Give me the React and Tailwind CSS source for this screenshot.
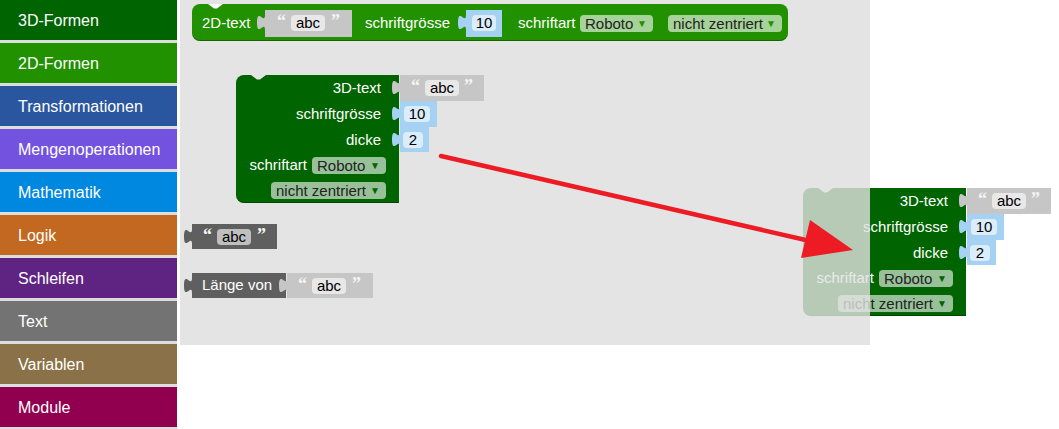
const categories = [
  ["3D-Formen", "bg-[#006400]"],
  ["2D-Formen", "bg-[#229100]"],
  ["Transformationen", "bg-[#2a56a0]"],
  ["Mengenoperationen", "bg-[#7452e0]"],
  ["Mathematik", "bg-[#0088e0]"],
  ["Logik", "bg-[#c26820]"],
  ["Schleifen", "bg-[#5f2382]"],
  ["Text", "bg-[#737373]"],
  ["Variablen", "bg-[#8b7148]"],
  ["Module", "bg-[#91004f]"],
];

function Tab({ fill }) {
  return (
    <svg width="8" height="15" viewBox="0 0 8 15" className="absolute -left-[8px] top-[5px] overflow-visible">
      <path d="M8.5 0 H8 C8 10 0 -8 0 7.5 S8 5 8 15 H8.5 Z" fill={fill} />
    </svg>
  );
}

function Notch({ fill, left }) {
  return (
    <svg width="15" height="5" viewBox="0 0 15 5" className={`absolute top-0 ${left}`}>
      <path d="M0 0 L6 4.5 L9 4.5 L15 0 Z" fill={fill} />
    </svg>
  );
}

function Field({ children, className = "" }) {
  return (
    <span className={`h-[16px] rounded-[4px] bg-white/60 text-black text-[15px] leading-[16px] flex items-center justify-center ${className}`}>
      {children}
    </span>
  );
}

function Dropdown({ label, arrow, className = "" }) {
  return (
    <span className={`h-[17px] rounded-[4px] bg-white/60 text-[#222] text-[15px] leading-[17px] flex items-center justify-between pl-[5px] pr-[6px] ${className}`}>
      <span>{label}</span>
      <span className={`text-[10px] ${arrow}`}>▼</span>
    </span>
  );
}

function Quote({ children, className = "" }) {
  return (
    <span className={`text-[#f4f4f4] font-bold text-[18px] leading-none -translate-y-[2px] font-['Liberation_Serif',serif] ${className}`}>
      {children}
    </span>
  );
}

function TextValue({ color = "#c6c6c6", className = "", quoteGap = "ml-[6px]" }) {
  return (
    <div className={`relative flex items-center pl-[11px] ${className}`} style={{ backgroundColor: color }}>
      <Tab fill={color} />
      <Quote className="w-[14px]">“</Quote>
      <Field className="w-[34px]">abc</Field>
      <Quote className={quoteGap}>”</Quote>
    </div>
  );
}

function NumValue({ value, className = "", fieldW }) {
  return (
    <div className={`relative flex items-center bg-[#a5d2f3] ${className}`}>
      <Tab fill="#a5d2f3" />
      <Field className={fieldW}>{value}</Field>
    </div>
  );
}

function ThreeDBlock({ className = "" }) {
  return (
    <div className={`flex items-start ${className}`}>
      <div className="relative w-[163px] h-[128px] bg-[#006400] rounded-l-[8px] flex flex-col text-white text-[15px] shadow-[inset_0_-1px_0_rgba(0,0,0,0.3)]">
        <Notch fill="#e4e4e4" left="left-[15px]" />
        <div className="h-[26px] flex items-center justify-end pr-[18px]">3D-text</div>
        <div className="h-[26px] flex items-center justify-end pr-[18px]">schriftgrösse</div>
        <div className="h-[26px] flex items-center justify-end pr-[18px]">dicke</div>
        <div className="h-[25px] flex items-center justify-end pr-[13px] gap-[5px]">
          <span>schriftart</span>
          <Dropdown label="Roboto" arrow="text-[#006400]" className="w-[74px]" />
        </div>
        <div className="h-[25px] flex items-center justify-end pr-[13px]">
          <Dropdown label="nicht zentriert" arrow="text-[#006400]" className="w-[115px]" />
        </div>
      </div>
      <div className="flex flex-col items-start ml-[1px]">
        <TextValue className="w-[84px] h-[26px]" quoteGap="ml-[5px]" />
        <NumValue value="10" className="w-[37px] h-[26px] pl-[4px]" fieldW="w-[26px]" />
        <NumValue value="2" className="w-[29px] h-[25px] pl-[3px]" fieldW="w-[20px]" />
      </div>
    </div>
  );
}

export default function App() {
  return (
    <div className="relative w-[1059px] h-[429px] bg-white flex overflow-hidden font-['Liberation_Sans',Arial,sans-serif]">
      <div className="w-[177px] h-[429px] flex flex-col gap-[3px] bg-[#dddddd]">
        {categories.map(([name, bg]) => (
          <div key={name} className={`h-[40px] shrink-0 flex items-center pl-[18px] pt-[2px] text-white text-[16px] ${bg}`}>
            {name}
          </div>
        ))}
      </div>

      <div className="relative ml-[3px] w-[690px] h-[345px] bg-[#e4e4e4]">
        {/* 2D-text block */}
        <div className="absolute left-[12px] top-[4px] w-[596px] h-[37px] rounded-[8px] bg-[#229100] flex items-center pl-[10px] pt-[1px] text-white text-[15px] shadow-[inset_0_-1px_0_rgba(0,0,0,0.3)]">
          <Notch fill="#ffffff" left="left-[16px]" />
          <span className="w-[63px]">2D-text</span>
          <TextValue className="w-[87px] h-[27px] pl-[12px]" />
          <span className="ml-[13px] w-[101px]">schriftgrösse</span>
          <NumValue value="10" className="w-[36px] h-[27px] pl-[6px]" fieldW="w-[24px]" />
          <span className="ml-[16px] w-[62px]">schriftart</span>
          <Dropdown label="Roboto" arrow="text-[#229100]" className="w-[73px]" />
          <Dropdown label="nicht zentriert" arrow="text-[#229100]" className="ml-[15px] w-[114px]" />
        </div>

        <ThreeDBlock className="absolute left-[56px] top-[75px]" />

        {/* text block */}
        <div className="absolute left-[12px] top-[224px] w-[85px] h-[25px]">
          <TextValue color="#5f5f5f" className="w-[85px] h-[25px]" />
        </div>

        {/* Länge von block */}
        <div className="absolute left-[12px] top-[273px] flex items-start">
          <div className="relative w-[94px] h-[25px] bg-[#5f5f5f] flex items-center pl-[10px] text-white text-[15px]">
            <Tab fill="#5f5f5f" />
            Länge von
          </div>
          <TextValue className="ml-[1px] w-[86px] h-[25px]" />
        </div>
      </div>

      {/* dragged block */}
      <ThreeDBlock className="absolute left-[803px] top-[188px]" />
      <div className="absolute left-[795px] top-[186px] w-[75px] h-[134px] bg-[#e4e4e4]/80" />

      <svg className="absolute inset-0 pointer-events-none" width="1059" height="429" viewBox="0 0 1059 429">
        <line x1="441" y1="156" x2="810" y2="241" stroke="#ed1c24" strokeWidth="4.5" strokeLinecap="round" />
        <polygon points="810,220 801,258 853,250" fill="#ed1c24" />
      </svg>
    </div>
  );
}
